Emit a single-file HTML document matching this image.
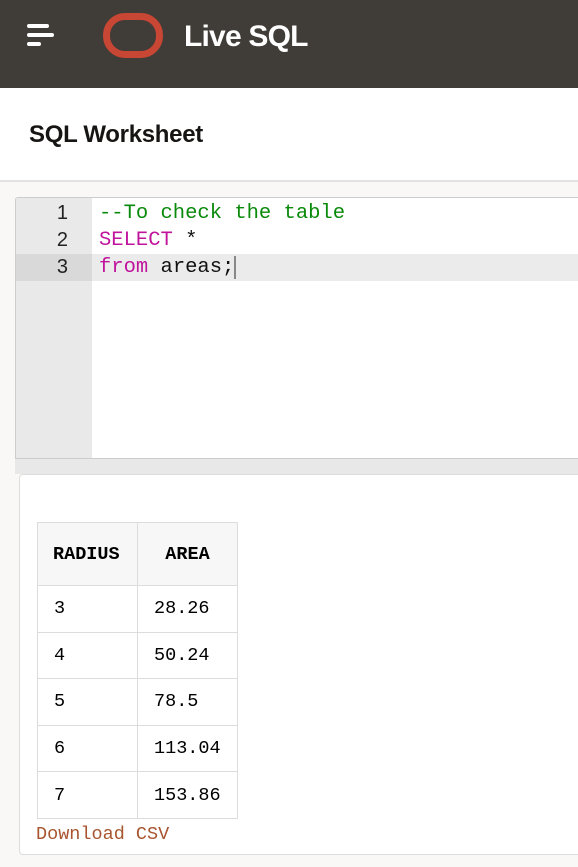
<!DOCTYPE html>
<html><head><meta charset="utf-8"><style>
*{margin:0;padding:0;box-sizing:border-box}
body{width:578px;height:867px;overflow:hidden;background:#f9f8f6;font-family:"Liberation Sans",sans-serif;position:relative}
.hdr{position:absolute;left:0;top:0;width:578px;height:88px;background:#403c37}
.ham{position:absolute;left:27px;height:4px;background:#fff;border-radius:2px}
.logo{position:absolute;left:103px;top:13px;width:60px;height:45px;border:7px solid #c74634;border-radius:22px}
.brand{position:absolute;left:184px;top:20px;color:#fff;font-weight:bold;font-size:30px;letter-spacing:-0.8px}
.sub{position:absolute;left:0;top:88px;width:578px;height:94px;background:#fff;border-bottom:2px solid #e2e2e2}
.sub h1{position:absolute;left:29px;top:33px;font-size:24px;font-weight:bold;color:#161513;letter-spacing:-0.3px}
.ed{position:absolute;left:15px;top:197px;width:570px;height:262px;background:#fff;border:1px solid #ccc;border-radius:3px 0 0 0;overflow:hidden}
.gut{position:absolute;left:0;top:0;width:76px;height:262px;background:#e9e9e9}
.ln{position:absolute;left:0;width:76px;height:27px;text-align:right;padding-right:24px;font-size:20px;line-height:27px;color:#222}
.cl{position:absolute;left:83px;height:27px;font-family:"Liberation Mono",monospace;font-size:20.5px;line-height:27px;white-space:pre;color:#111}
.act{position:absolute;left:76px;top:56px;width:500px;height:27px;background:#ebebeb}
.sb{position:absolute;left:15px;top:459px;width:570px;height:15px;background:#e8e8e8}
.res{position:absolute;left:19px;top:474px;width:570px;height:381px;background:#fff;border:1px solid #ddd;border-radius:4px}
table{position:absolute;left:17px;top:47px;border-collapse:collapse;font-family:"Liberation Mono",monospace;font-size:18.5px}
td,th{border:1px solid #dcdcdc;width:100px;height:46.6px;padding-left:16px;text-align:left}
th{height:63px;background:#f7f7f7;font-weight:bold;padding-left:15px}
.dl{position:absolute;left:16px;top:349px;font-family:"Liberation Mono",monospace;font-size:18.5px;color:#a8552f}
</style></head><body>
<div class="hdr">
<div class="ham" style="top:24px;width:22px"></div>
<div class="ham" style="top:33px;width:27px"></div>
<div class="ham" style="top:42px;width:14px"></div>
<div class="logo"></div>
<div class="brand">Live SQL</div>
</div>
<div class="sub"><h1>SQL Worksheet</h1></div>
<div class="ed">
<div class="gut"></div>
<div class="ln" style="top:56px;background:#d9d9d9"></div>
<div class="act"></div>
<div class="ln" style="top:2px">1</div>
<div class="ln" style="top:29px">2</div>
<div class="ln" style="top:56px">3</div>
<div class="cl" style="top:2px;color:#0a8a0a">--To check the table</div>
<div class="cl" style="top:29px"><span style="color:#c0149c">SELECT</span> *</div>
<div class="cl" style="top:56px"><span style="color:#c0149c">from</span> areas;<span style="border-left:2px solid #888"></span></div>
</div>
<div class="sb"></div>
<div class="res">
<table>
<tr><th>RADIUS</th><th style="text-align:center;padding-left:0">AREA</th></tr>
<tr><td>3</td><td>28.26</td></tr>
<tr><td>4</td><td>50.24</td></tr>
<tr><td>5</td><td>78.5</td></tr>
<tr><td>6</td><td>113.04</td></tr>
<tr><td>7</td><td>153.86</td></tr>
</table>
<div class="dl">Download CSV</div>
</div>
</body></html>
